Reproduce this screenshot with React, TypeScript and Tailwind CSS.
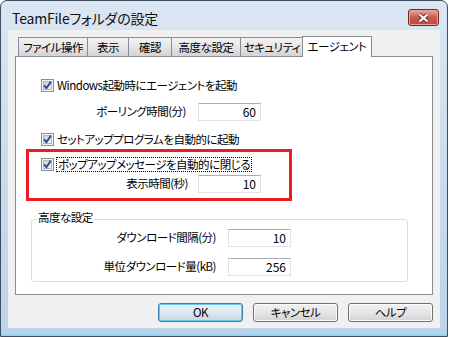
import React from "react";

const font = "font-['Noto_Sans_CJK_JP','Noto_Sans',sans-serif] [font-feature-settings:'palt']";
const txt = "text-[11.5px] tracking-[-0.5px]";

function CheckBox() {
  return (
    <svg width="13" height="13" viewBox="0 0 13 13" className="shrink-0">
      <defs>
        <linearGradient id="cbg" x1="0" y1="0" x2="1" y2="1">
          <stop offset="0" stopColor="#c9ced6" />
          <stop offset="1" stopColor="#f6f6f6" />
        </linearGradient>
      </defs>
      <rect x="0.5" y="0.5" width="12" height="12" fill="#f5f5f5" stroke="#8e8f8f" />
      <rect x="2.5" y="2.5" width="8" height="8" fill="url(#cbg)" stroke="#b3b8bf" />
      <path d="M3.2 6.4 L5.4 9.2 L9.9 2.6" stroke="#2a4c96" strokeWidth="1.9" fill="none" />
    </svg>
  );
}

function Input({ value }: { value: string }) {
  return (
    <div className="w-[63px] h-[18px] bg-white border border-[#dfe3e9] border-t-[#abadb3] flex items-center justify-end pr-[4px] text-[12px] tracking-normal leading-none text-black">
      {value}
    </div>
  );
}

function Tab({ label, w, first }: { label: string; w: string; first?: boolean }) {
  return (
    <div
      className={`${w} h-[19px] ${first ? "" : "-ml-px"} border border-b-0 border-[#898c95] bg-gradient-to-b from-[#f2f2f2] via-[#e6e6e6] to-[#d3d3d3] flex items-center justify-center pt-[2px] ${txt} leading-none text-black whitespace-nowrap`}
    >
      {label}
    </div>
  );
}

function Button({ label, def }: { label: string; def?: boolean }) {
  return (
    <div
      className={`w-[85px] h-[19px] rounded-[3px] border flex items-center justify-center ${txt} leading-none text-black ${
        def
          ? "border-[#3c7fb1] bg-gradient-to-b from-[#eaf3f9] via-[#dde8ef] to-[#c9d7e1] shadow-[inset_0_0_0_1px_#68c8f0]"
          : "border-[#707070] bg-gradient-to-b from-[#f2f2f2] via-[#e6e6e6] to-[#d2d2d2] shadow-[inset_0_0_0_1px_#fcfcfc]"
      }`}
    >
      {label}
    </div>
  );
}

export default function App() {
  return (
    <div className={`w-[449px] h-[337px] bg-white ${font}`}>
      <div className="w-[448px] h-[337px] rounded-t-[7px] border border-[#3e4d5f] bg-gradient-to-b from-[#dbe6f3] via-[#cadced] to-[#bcd3ea] flex flex-col px-[7px] pb-[8px] shadow-[inset_0_-2px_0_#8fd3ee]">
        {/* title bar */}
        <div className="h-[29px] flex items-start justify-between">
          <div className="mt-[9px] ml-[4px] text-[14px] tracking-[-0.2px] leading-[16px] text-[#111] whitespace-nowrap">
            TeamFileフォルダの設定
          </div>
          <div className="mt-[8px] mr-[1px] w-[31px] h-[17px] rounded-[3px] border border-[#6e2b27] bg-gradient-to-b from-[#e8aa9e] via-[#cb5a4d] to-[#c0473a] shadow-[inset_0_0_0_1px_#e9a193] flex items-center justify-center">
            <svg width="13" height="10" viewBox="0 0 13 10">
              <path d="M2.5 1.5 L10.5 8.5 M10.5 1.5 L2.5 8.5" stroke="#5a3530" strokeWidth="4" />
              <path d="M2.5 1.5 L10.5 8.5 M10.5 1.5 L2.5 8.5" stroke="#ffffff" strokeWidth="2.2" />
            </svg>
          </div>
        </div>

        {/* client */}
        <div className="flex-1 bg-[#f0f0f0] flex flex-col px-[7px] pt-[6px]">
          {/* tabs */}
          <div className="relative z-10 h-[20px] flex items-end pl-[3px]">
            <Tab label="ファイル操作" w="w-[70px]" first />
            <Tab label="表示" w="w-[42px]" />
            <Tab label="確認" w="w-[44px]" />
            <Tab label="高度な設定" w="w-[70px]" />
            <Tab label="セキュリティ" w="w-[64px]" />
            <div className={`-ml-[2px] -mb-px w-[70px] h-[21px] border border-b-0 border-[#898c95] bg-white flex items-center justify-center ${txt} leading-none text-black whitespace-nowrap`}>
              エージェント
            </div>
          </div>

          {/* panel */}
          <div className={`h-[239px] border border-[#898c95] bg-white flex flex-col pl-[10px] ${txt} leading-none text-black`}>
            <div className="mt-[20px] h-[17px] pl-[15px] flex items-center">
              <CheckBox />
              <span className="ml-[3px] whitespace-nowrap">Windows起動時にエージェントを起動</span>
            </div>
            <div className="mt-[9px] h-[18px] flex items-center">
              <div className="w-[160px] text-right whitespace-nowrap">ポーリング時間(分)</div>
              <div className="ml-[12px]">
                <Input value="60" />
              </div>
            </div>
            <div className="mt-[10px] h-[17px] pl-[15px] flex items-center">
              <CheckBox />
              <span className="ml-[3px] whitespace-nowrap">セットアッププログラムを自動的に起動</span>
            </div>

            {/* red highlight */}
            <div className="mt-[1px] w-[266px] h-[52px] border-[3px] border-[#ed1c24] flex flex-col">
              <div className="mt-[4px] h-[17px] pl-[12px] flex items-center">
                <CheckBox />
                <span className="ml-[2px] px-px py-[1px] border border-dotted border-black whitespace-nowrap">
                  ポップアップメッセージを自動的に閉じる
                </span>
              </div>
              <div className="mt-[2px] h-[18px] flex items-center">
                <div className="w-[159px] text-right whitespace-nowrap">表示時間(秒)</div>
                <div className="ml-[10px]">
                  <Input value="10" />
                </div>
              </div>
            </div>

            {/* group */}
            <div className="relative mt-[18px] ml-[5px] w-[377px] h-[63px] rounded-[3px] border border-[#d5dfe5] flex flex-col">
              <div className="absolute left-[5px] -top-[8px] bg-white px-[1px] whitespace-nowrap">高度な設定</div>
              <div className="mt-[9px] h-[18px] flex items-center">
                <div className="w-[184px] text-right whitespace-nowrap">ダウンロード間隔(分)</div>
                <div className="ml-[12px]">
                  <Input value="10" />
                </div>
              </div>
              <div className="mt-[11px] h-[18px] flex items-center">
                <div className="w-[184px] text-right whitespace-nowrap">単位ダウンロード量(kB)</div>
                <div className="ml-[12px]">
                  <Input value="256" />
                </div>
              </div>
            </div>
          </div>

          {/* buttons */}
          <div className="mt-[8px] flex justify-end gap-[10px]">
            <Button label="OK" def />
            <Button label="キャンセル" />
            <Button label="ヘルプ" />
          </div>
        </div>
      </div>
    </div>
  );
}
